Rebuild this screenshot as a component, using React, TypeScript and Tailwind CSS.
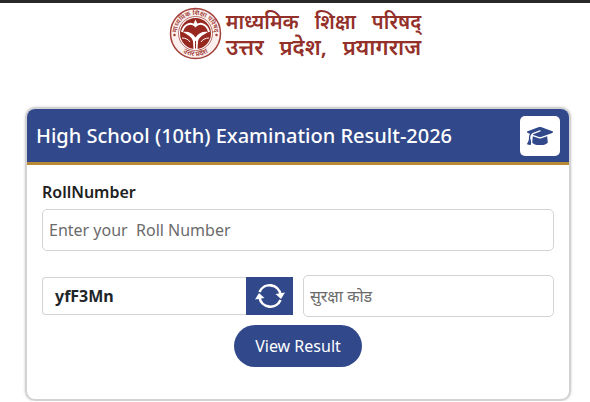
import React, { useState } from 'react';
import { FaGraduationCap } from 'react-icons/fa6';

const BoardEmblem: React.FC = () => (
  <svg viewBox="0 0 106 106" className="w-[53px] h-[53px] shrink-0" role="img" aria-label="उत्तर प्रदेश">
    <defs>
      <path id="arcTop" d="M17 64 A37.500 37.500 0 1 1 89 64" />
      <path id="arcBottom" d="M12 72 A45 45 0 0 0 94 72" />
    </defs>
    <circle cx="53" cy="53" r="50" fill="#fbf0ed" stroke="#a3403a" strokeWidth="3" />
    <circle cx="53" cy="53" r="34" fill="#fff" stroke="#a3403a" strokeWidth="1.500" />
    <text fontSize="13" fontWeight="600" fill="#a3403a" textAnchor="middle">
      <textPath href="#arcTop" startOffset="50%">माध्यमिक शिक्षा परिषद्</textPath>
    </text>
    <text fontSize="14" fontWeight="600" fill="#a3403a" textAnchor="middle">
      <textPath href="#arcBottom" startOffset="50%">उत्तर प्रदेश</textPath>
    </text>
    <circle cx="11" cy="56" r="2.500" fill="#a3403a" />
    <circle cx="95" cy="56" r="2.500" fill="#a3403a" />
    <circle cx="53" cy="53" r="31" fill="#972820" />
    {/* bow above, rivers meeting in the middle, fish on both sides */}
    <path d="M26 50 C30 34 44 29 53 38 C62 29 76 34 80 50" fill="none" stroke="#fff" strokeWidth="4" />
    <path d="M53 25 L58 36 H48 Z" fill="#fff" />
    <path d="M28 50 C38 48 47 52 53 61 C59 52 68 48 78 50 C70 55 59 60 58 69 L57 84 H49 L48 69 C47 60 36 55 28 50 Z" fill="#fff" />
    <path d="M53 68 V83" stroke="#972820" strokeWidth="2" />
    <path d="M26 62 C33 62 39 65 42 70 M80 62 C73 62 67 65 64 70" fill="none" stroke="#fff" strokeWidth="2" />
  </svg>
);

const RefreshIcon: React.FC = () => (
  <svg viewBox="0 0 30 26" className="w-[30px] h-[26px]" fill="none" stroke="#fff" strokeWidth="2.600" aria-hidden="true">
    <path d="M4.500 9 A11 11 0 0 1 25.500 11.500" />
    <path d="M25.500 17 A11 11 0 0 1 4.500 14.500" />
    <path d="M20.500 11 L30 9.500 L26 16 Z" fill="#fff" stroke="none" />
    <path d="M0 16.500 L9.500 15 L4 10 Z" fill="#fff" stroke="none" />
  </svg>
);

const inputClasses =
  'w-full h-[42px] min-w-0 rounded-[5px] border border-[#d3d3d3] bg-white px-1.5 text-base text-[#212529] placeholder:text-[#6b6b6b] outline-none focus:border-[#31488a]';

const App: React.FC = () => {
  const [rollNumber, setRollNumber] = useState('');
  const [code, setCode] = useState('');

  return (
    <div className="bg-white border-t-3 border-[#29292b] font-['Noto_Sans','Open_Sans',sans-serif]">
      <header className="flex items-center justify-center gap-1 pt-1 pb-[47px]">
        <BoardEmblem />
        <h1 className="font-semibold text-[#94302a] whitespace-nowrap">
          <span className="flex justify-between gap-4 text-[20px] leading-6">
            <span>माध्यमिक</span> <span>शिक्षा</span> <span>परिषद्</span>
          </span>
          <span className="flex justify-between text-[22px] leading-6">
            <span>उत्तर</span> <span>प्रदेश,</span> <span>प्रयागराज</span>
          </span>
        </h1>
      </header>

      <main className="ml-[25px] mr-[19px] rounded-[10px] border-2 border-[#d2d2d4] overflow-hidden shadow-[0_0_3px_#d0d0d4]">
        <div className="flex items-center justify-between bg-[#31488a] border-b-3 border-[#b88a35] h-[56px] px-[9px]">
          <h2 className="text-[20px] leading-6 font-medium text-white">High School (10th) Examination Result-2026</h2>
          <span className="flex items-center justify-center w-10 h-10 rounded-[5px] bg-white text-[#31488a]">
            <FaGraduationCap className="w-[26px] h-[22px]" />
          </span>
        </div>

        <form className="px-[15px] pt-[15px] pb-8" onSubmit={(e) => e.preventDefault()}>
          <label htmlFor="roll" className="block mb-[5px] text-base leading-6 font-semibold text-[#212121]">
            RollNumber
          </label>
          <input
            id="roll"
            className={inputClasses}
            placeholder="Enter your  Roll Number"
            value={rollNumber}
            onChange={(e) => setRollNumber(e.target.value)}
          />

          <div className="flex items-center gap-2.5 mt-6">
            <div className="flex flex-1 h-[38px]">
              <div className="flex flex-1 items-center rounded-l-[4px] border border-r-0 border-[#d3d3d3] pl-3 text-base font-bold text-[#212529]">
                yfF3Mn
              </div>
              <button type="button" aria-label="Refresh code" className="flex items-center justify-center w-[47px] bg-[#31488a]">
                <RefreshIcon />
              </button>
            </div>
            <div className="flex flex-1">
              <input
                aria-label="सुरक्षा कोड"
                className={inputClasses}
                placeholder="सुरक्षा कोड"
                value={code}
                onChange={(e) => setCode(e.target.value)}
              />
            </div>
          </div>

          <button type="submit" className="block mx-auto mt-2 h-[42px] w-32 rounded-full bg-[#31488a] text-base text-white">
            View Result
          </button>
        </form>
      </main>
    </div>
  );
};

export default App;
